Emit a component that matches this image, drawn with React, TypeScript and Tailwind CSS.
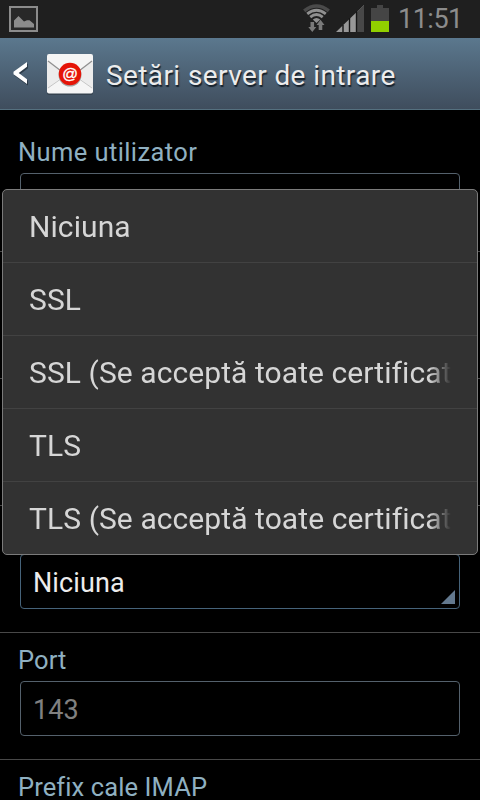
const options = [
  'Niciuna',
  'SSL',
  'SSL (Se acceptă toate certificat',
  'TLS',
  'TLS (Se acceptă toate certificat',
];

function StatusBar() {
  return (
    <div className="flex h-[38px] shrink-0 items-start bg-[#1f1f1f]">
      <svg className="ml-[9px] mt-[6px]" width="29" height="26" viewBox="0 0 29 26">
        <rect x="1" y="1" width="27" height="24" fill="#282828" stroke="#8c8c8c" strokeWidth="2" />
        <path d="M5 21.500V14.500L9.500 10 15 15.500 18 14.200H20.500L25 18V21.500Z" fill="#8c8c8c" />
      </svg>
      <svg className="ml-auto mt-[4px]" width="27" height="30" viewBox="0 0 27 30" fill="none">
        <path d="M1.200 6.800Q13.500-2.800 25.800 6.800" stroke="#4a4a4a" strokeWidth="3.600" />
        <path d="M4.200 9.900Q13.500 2.600 22.800 9.900" stroke="#909090" strokeWidth="2.800" />
        <path d="M7.300 13.100Q13.500 8 19.700 13.100" stroke="#909090" strokeWidth="2.800" />
        <path d="M9.800 15.600Q13.500 12.200 17.200 15.600L13.500 19Z" fill="#909090" />
        <path d="M7.500 18h3.600v5h2.200l-4 5-4-5h2.200Z" fill="#7a7a7a" />
        <path d="M15.700 26v-5h-2.200l4-5.200 4 5.200h-2.200v5Z" fill="#7a7a7a" />
      </svg>
      <svg className="ml-[6px] mt-[5px]" width="29" height="27" viewBox="0 0 29 27">
        <path d="M0 27 28 0V27Z" fill="#989898" />
        <path d="M21 6.800 28 0V27H21Z" fill="#484848" />
        <path d="M7 20v7M13.500 13v14M20.500 6v21" stroke="#161616" strokeWidth="1.400" />
      </svg>
      <svg className="ml-[6px] mt-[5px]" width="18" height="27" viewBox="0 0 18 27">
        <path d="M0 3H6V0H12V3H18V27H0Z" fill="#454545" />
        <path d="M0 16H18V27H0Z" fill="#91cf00" />
      </svg>
      <span className="ml-[9px] mt-[4px] w-[82px] whitespace-nowrap text-[27px] leading-[31px] tracking-[-0.5px] text-[#8c8c8c]">
        11:51
      </span>
    </div>
  );
}

function Header() {
  return (
    <header className="flex h-[72px] shrink-0 items-center border-b border-[#55707f] bg-linear-to-b from-[#5b788e] to-[#3f4d5d]">
      <svg className="ml-[13px] mt-[1px]" width="16" height="26" viewBox="0 0 16 26">
        <path d="M14 1v4.800L5.700 12l8.300 6.200V23L.5 13.200v-2.400Z" fill="#17212b" opacity=".6" transform="translate(1 1.500)" />
        <path d="M14 1v4.800L5.700 12l8.300 6.200V23L.5 13.200v-2.400Z" fill="#fff" />
      </svg>
      <svg className="ml-[18px] mt-[2px]" width="46" height="41" viewBox="0 0 46 41">
        <rect y="1" width="46" height="40" rx="2" fill="#35424f" />
        <rect width="46" height="39.500" rx="2" fill="#f5f5f5" />
        <path d="M0 7 18 20 0 35ZM46 7 28 20 46 35Z" fill="#ececec" />
        <path d="M1 7 18 20M45 7 28 20" stroke="#919191" strokeWidth="1.300" />
        <path d="M1 34 18 22M45 34 28 22" stroke="#c5c5c5" strokeWidth="1" />
        <circle cx="23" cy="21" r="11.500" fill="#a5a5a5" />
        <circle cx="23" cy="20" r="11.200" fill="#e51407" />
        <text x="23" y="24.800" textAnchor="middle" fontFamily="Liberation Sans, sans-serif" fontWeight="400" fontSize="15.500" fill="#fff" stroke="#fff" strokeWidth=".35">@</text>
      </svg>
      <h1 className="ml-[13px] mt-[4px] whitespace-nowrap text-[28px] leading-8 tracking-[0.4px] text-[#ececec] [text-shadow:1px_2px_1px_#17212b]">
        Setări server de intrare
      </h1>
    </header>
  );
}

interface FieldProps {
  label?: string;
  labelClass?: string;
  value?: string;
  muted?: boolean;
  spinner?: boolean;
}

function Field({ label, labelClass = 'tracking-[0.4px]', value, muted, spinner }: FieldProps) {
  return (
    <div className="flex h-[127px] shrink-0 flex-col border-b border-[#484848] px-5">
      <div className={`-ml-[2px] h-12 whitespace-nowrap pt-[11px] text-[25.5px] leading-8 text-[#8fb0c1] ${labelClass}`}>{label}</div>
      <div className={`flex h-[55px] items-center justify-between rounded-[4px] border pl-[12px] text-[27px] ${spinner ? 'border-[#46637a]' : 'border-[#54616c]'} ${muted ? 'text-[#808080]' : 'text-[#ececec]'}`}>
        <span className="mt-[4px] tracking-[0.1px]">{value}</span>
        {spinner && (
          <svg className="mb-[4px] mr-[4px] self-end" width="14" height="14" viewBox="0 0 14 14">
            <path d="M14 0V14H0Z" fill="#63798f" />
          </svg>
        )}
      </div>
    </div>
  );
}

export default function App() {
  return (
    <div className="relative flex h-[800px] w-[480px] flex-col overflow-hidden bg-black font-['Roboto',sans-serif]">
      <StatusBar />
      <Header />
      <main className="flex flex-col pt-[15px]">
        <Field label="Nume utilizator" />
        <Field />
        <Field />
        <Field value="Niciuna" spinner />
        <Field label="Port" labelClass="tracking-[0.1px]" value="143" muted />
        <Field label="Prefix cale IMAP" labelClass="tracking-[0.1px]" />
      </main>
      <ul className="absolute left-[2px] top-[189px] w-[476px] rounded-[5px] border border-[#7b7b7b] bg-[#323232]">
        {options.map((option) => (
          <li key={option} className="flex h-[73px] items-center border-b border-[#424242] pl-[26px] pr-[26px] pt-[2px] last:h-[72px] last:border-b-0">
            <span className="w-full overflow-hidden whitespace-nowrap text-[30px] leading-10 tracking-[0.08px] text-[#d6d6d6] mask-[linear-gradient(to_right,#000_calc(100%-22px),transparent)]">
              {option}
            </span>
          </li>
        ))}
      </ul>
    </div>
  );
}
